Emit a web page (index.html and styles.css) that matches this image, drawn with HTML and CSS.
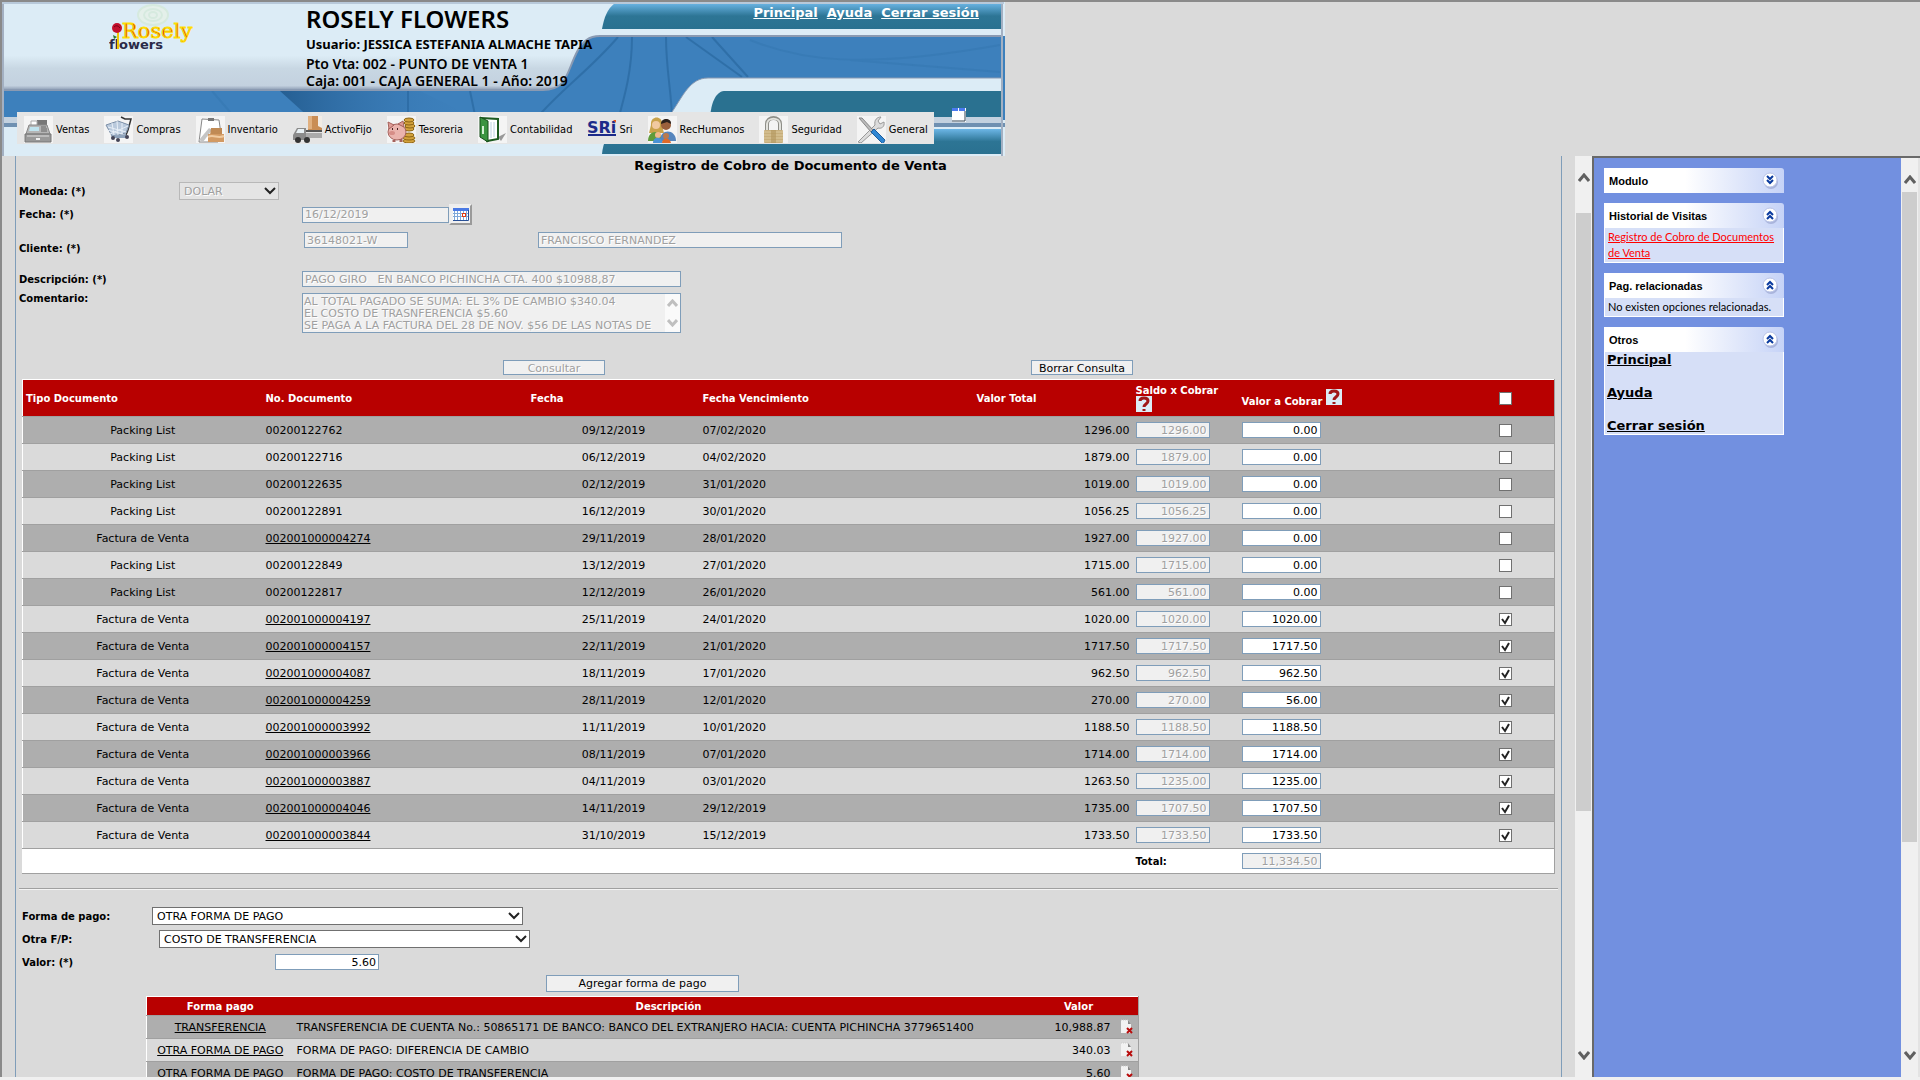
FILE: index.html
```
<!DOCTYPE html>
<html lang="es">
<head>
  <meta charset="UTF-8">
  <title>Rosely Flowers - Registro de Cobro</title>
  <link rel="stylesheet" href="styles.css">
</head>
<body>

  <!-- Cabecera -->
  <header class="header">
    <svg class="header-bg" viewBox="0 0 1005 156" width="1005" height="156" aria-hidden="true">
      <defs>
        <linearGradient id="gPanel" x1="0" y1="0" x2="0" y2="1">
          <stop offset="0.6" stop-color="#dcecf6"/><stop offset="0.75" stop-color="#c8d7e3"/><stop offset="0.95" stop-color="#c3d1df"/><stop offset="1" stop-color="#8a9ab2"/>
        </linearGradient>
        <linearGradient id="gTeal" x1="0" y1="0" x2="0" y2="1">
          <stop offset="0" stop-color="#6cb6e6"/><stop offset="0.5" stop-color="#2d7595"/><stop offset="1" stop-color="#2a7190"/>
        </linearGradient>
        <linearGradient id="gShade" x1="0" y1="0" x2="1" y2="0">
          <stop offset="0" stop-color="#1f5688" stop-opacity="0.8"/><stop offset="1" stop-color="#3d80bd" stop-opacity="0"/>
        </linearGradient>
      </defs>
      <rect x="2" y="2" width="1003" height="154" fill="#dcecf6"/>
      <rect x="4" y="36" width="1001" height="84" fill="#3d80bc"/>
      <path d="M280 91 H420 L480 120 H312 Z" fill="url(#gShade)"/>
      <path d="M408 91 V120 M632 37 C632 70 625 95 618 120 M666 37 C666 70 672 95 672 120 M686 37 L742 77 M712 37 L748 77 M618 37 C590 70 560 90 535 120 M470 91 L476 120" fill="none" stroke="#2a689f" stroke-width="2" opacity="0.7"/>
      <path d="M212 91 L230 112 M750 40 C800 60 860 70 1000 45 M850 60 L1000 72" fill="none" stroke="#3373ac" stroke-width="2" opacity="0.4"/>
      <path d="M4 4 H1002 V36 H600 C588 36 583 42 578 50 C566 72 568 90 543 90 H4 Z" fill="url(#gPanel)"/>
      <path d="M600 29 H1002 V36 H600 Z M602 4 H618 V36 H590 Z" fill="#dcecf6"/>
      <path d="M1002 36 H600 C588 36 583 42 578 50 C566 72 568 90 543 90 H4" fill="none" stroke="#8a9ab2" stroke-width="2"/>
      <path d="M615 3 H1002 V29 H602 C604 18 607 9 615 3 Z" fill="url(#gTeal)"/>
      <path d="M1002 78 H708 C690 78 683 96 672 112 V118 H1002 Z" fill="#dcecf6" stroke="#8a9ab2"/>
      <path d="M1002 91 H724 C715 92 711 104 710 118 H1002 Z" fill="#2a7190"/>
      <rect x="4" y="117" width="998" height="6" fill="#c3d1df"/>
      <rect x="4" y="123" width="1001" height="4" fill="#6f90b1"/>
      <rect x="4" y="127" width="998" height="2" fill="#dcecf6"/>
      <path d="M615 129 H1002 V154 H602 C603 143 607 134 615 129 Z" fill="url(#gTeal)"/>
      <path d="M3 3 V156 M1002 3 V156" stroke="#a3b0c2" stroke-width="2"/>
      <path d="M2 3 H1004" stroke="#b8c9da" stroke-width="2"/>
    </svg>

    <div class="brand">
      <svg width="92" height="50" viewBox="0 0 92 50" role="img" aria-label="Rosely flowers">
        <g fill="none" stroke="#d6eadf" stroke-width="2"><ellipse cx="44" cy="12" rx="15" ry="10" fill="#e4f0ea"/><ellipse cx="44" cy="12" rx="9" ry="6"/><ellipse cx="44" cy="12" rx="4" ry="3"/></g>
        <text x="13" y="35" class="logo-top">Rosely</text>
        <text x="0" y="46" class="logo-sub">flowers</text>
        <path d="M9 28 V46" stroke="#f0c800" stroke-width="2"/>
        <circle cx="8" cy="25" r="5" fill="#c4102c"/><path d="M5 24 q3 -3 6 1" stroke="#7c0018" fill="none"/>
        <path d="M8 34 l-4 -2 1 4z" fill="#2c7a2c"/>
      </svg>
    </div>
    <div class="session">
      <h1>ROSELY FLOWERS</h1>
      <p class="user">Usuario: JESSICA ESTEFANIA ALMACHE TAPIA</p>
      <p>Pto Vta: 002 - PUNTO DE VENTA 1</p>
      <p>Caja: 001 - CAJA GENERAL 1 - Año: 2019</p>
    </div>
    <div class="top-links">
      <a href="#">Principal</a>
      <a href="#">Ayuda</a>
      <a href="#">Cerrar sesión</a>
    </div>

    <nav class="menu">
      <a href="#"><svg viewBox="0 0 29 27"><rect width="29" height="27" fill="#f4f4f4"/><path d="M13 4h10v5h-10z" fill="#777"/><path d="M7 5h6v6H7z" fill="#fff" stroke="#aaa"/><path d="M5 9h18l3 9H2z" fill="#b5b5b5" stroke="#888"/><path d="M6 11h9v4H5z" fill="#bfe3ee"/><path d="M17 11h5M17 13h6M17 15h6" stroke="#666"/><path d="M1 18h26v8H1z" fill="#999" stroke="#777"/><path d="M3 20h22" stroke="#ddd"/><path d="M12 22h4v2h-4z" fill="#eee"/></svg>Ventas</a>
      <a href="#"><svg viewBox="0 0 29 27"><rect width="29" height="27" fill="#f4f4f4"/><path d="M17 1l4 2h6l-3 11-2 5" fill="none" stroke="#333" stroke-width="1.5"/><path d="M2 9l12-4 11 4-3 8-14 3z" fill="#b9c9dc" stroke="#7d90a8"/><path d="M4 11l18 5M3 14l16 4M8 7l2 12M13 5l1 14M18 7l0 11M6 18l18-8" stroke="#e8eff7"/><path d="M7 20l15-2 1 4H9z" fill="#8fa3bb"/><circle cx="9" cy="22" r="2" fill="#445"/><circle cx="14" cy="24" r="2" fill="#445"/><circle cx="23" cy="21" r="2" fill="#445"/></svg>Compras</a>
      <a href="#"><svg viewBox="0 0 29 27"><rect width="29" height="27" fill="#f4f4f4"/><path d="M6 3l17 1 2 14-3 8H3z" fill="#fff" stroke="#888"/><path d="M12 2h6v3h-6z" fill="#777"/><path d="M3 24L13 12l3 2-9 12z" fill="#c5c5c5"/><path d="M15 12h11v7H14z" fill="#c08a54"/><path d="M12 18h16v8H12z" fill="#d29a63"/><path d="M12 21c5-3 10 2 16-1" stroke="#f0cba0" fill="none" stroke-width="2"/></svg>Inventario</a>
      <a href="#"><svg viewBox="0 0 29 27"><path d="M15 0h14v15H15z" fill="#c98d55"/><path d="M22 0h3v10l4 2v-12z" fill="#f1ece6"/><path d="M15 0h4v13h-4z" fill="#e0b080"/><path d="M4 12h9v12H0v-5z" fill="#8b8b8b"/><path d="M5 13h6v4H3z" fill="#e8f0f4"/><path d="M13 17h16v5H13z" fill="#aaa"/><path d="M13 15h16" stroke="#555" stroke-width="2"/><circle cx="5" cy="24" r="3" fill="#333"/><circle cx="14" cy="24" r="3" fill="#333"/></svg>ActivoFijo</a>
      <a href="#"><svg viewBox="0 0 29 27"><rect width="29" height="27" fill="#f4f4f4"/><g fill="#d3a23c" stroke="#8c6414"><ellipse cx="22" cy="13" rx="5" ry="2"/><ellipse cx="23" cy="10" rx="5" ry="2"/><ellipse cx="22" cy="7" rx="5" ry="2"/><ellipse cx="22" cy="4" rx="5" ry="2"/><ellipse cx="22" cy="25" rx="6" ry="2"/><ellipse cx="22" cy="22" rx="6" ry="2"/><ellipse cx="22" cy="19" rx="5" ry="2"/></g><ellipse cx="10" cy="16" rx="9" ry="8" fill="#eab3ad" stroke="#a5625c"/><path d="M2 13L1 6l6 3zM11 8l5-3 1 6z" fill="#e09c96" stroke="#a5625c"/><ellipse cx="5" cy="17" rx="3" ry="2" fill="#d68d87"/><path d="M7 24v2M14 23v3" stroke="#a5625c" stroke-width="3"/><path d="M5 13h1M10 13h1" stroke="#422" stroke-width="2"/></svg>Tesoreria</a>
      <a href="#"><svg viewBox="0 0 29 27"><rect width="29" height="27" fill="#f4f4f4"/><path d="M20 21l8-4-5 8z" fill="#999"/><path d="M3 2l17 1v20L9 25z" fill="#fff" stroke="#1e5a20" stroke-width="2"/><path d="M2 1l8 4v21l-8-5z" fill="#3c9440" stroke="#174d19"/><path d="M5 10v8" stroke="#d7f0d5" stroke-width="2"/><path d="M13 6v16M16 6v15" stroke="#bcd0df"/></svg>Contabilidad</a>
      <a href="#"><svg viewBox="0 0 29 27"><text x="0" y="17" class="sri">SRi</text><path d="M26 4h3v3z" fill="#e2571e"/><path d="M1 19h28" stroke="#1c2b8a" stroke-width="2"/></svg>Sri</a>
      <a href="#"><svg viewBox="0 0 29 27"><rect width="29" height="27" fill="#f4f4f4"/><path d="M3 9c-1-10 13-10 11 1l2 7H1z" fill="#c9a24a"/><circle cx="8" cy="9" r="4" fill="#f1c9a0"/><path d="M0 25c0-12 14-12 15 0z" fill="#5f9b3b"/><circle cx="18" cy="9" r="5" fill="#9c603c"/><path d="M13 8c0-7 11-6 10 0l-4-2z" fill="#2d211c"/><path d="M12 25c0-13 16-12 16 0z" fill="#5585bd"/><circle cx="10" cy="19" r="3" fill="#efb98c"/><path d="M5 27c0-7 9-7 10 0z" fill="#4a93d6"/><circle cx="18" cy="20" r="3" fill="#b97a4e"/><path d="M14 27c0-6 8-6 9 0z" fill="#e06a28"/></svg>RecHumanos</a>
      <a href="#"><svg viewBox="0 0 29 27"><rect width="29" height="27" fill="#f4f4f4"/><path d="M8 14V8c0-8 13-8 13 0v6" fill="none" stroke="#8e8e88" stroke-width="4"/><path d="M8 14V8c0-7 13-7 13 0v6" fill="none" stroke="#e2e2dd" stroke-width="2"/><rect x="5" y="14" width="19" height="13" rx="1" fill="#c7ae7b"/><path d="M5 16h19M5 19h19M5 22h19M5 25h19" stroke="#dcc99e"/><path d="M12 14h5v13h-5z" fill="#b1945c" opacity=".6"/></svg>Seguridad</a>
      <a href="#"><svg viewBox="0 0 29 27"><rect width="29" height="27" fill="#f4f4f4"/><path d="M1 26L18 9c-1-5 2-8 6-8l-3 4 2 3 4-2c1 5-3 7-6 6L4 27z" fill="#dcdcdc" stroke="#999"/><path d="M2 2l3 0 11 12-2 2z" fill="#bbb" stroke="#888"/><path d="M14 16l3-3 11 11-2 4z" fill="#2f86d2" stroke="#1b5c9c"/></svg>General</a>
    </nav>
    <svg class="window-icon" width="14" height="14" viewBox="0 0 14 14"><path d="M0 0h14v14H0z" fill="#fff"/><path d="M0 0h6v3H0zM7 0h6v3H7z" fill="#4b7af0"/><path d="M0 13h13V3" fill="none" stroke="#345"/></svg>
  </header>

  <div class="frames">
    <main class="content-frame">
      <div class="content">
        <h2>Registro de Cobro de Documento de Venta</h2>

        <form class="query">
          <div class="row moneda">
            <label for="moneda">Moneda: (*)</label>
            <select id="moneda" disabled><option>DOLAR</option></select>
          </div>
          <div class="row fecha">
            <label for="fecha">Fecha: (*)</label>
            <input type="text" id="fecha" value="16/12/2019" disabled>
            <button type="button" class="calendar" aria-label="Calendario"><svg width="16" height="13" viewBox="0 0 16 13"><path d="M0 0h16v13H0z" fill="#fff"/><path d="M0 0h16v3H0z" fill="#4b7ae4"/><path d="M0 5.500h15M0 8.500h15M1.500 3v9M4.500 3v9M7.500 3v9M10.500 3v9M13.500 3v9" stroke="#7fa8d8"/><path d="M15.500 2v10.500H0" fill="none" stroke="#274f96"/><rect x="9.500" y="5.500" width="3" height="3" fill="#fff" stroke="#e23a12"/></svg></button>
          </div>
          <div class="row cliente">
            <label for="cliente">Cliente: (*)</label>
            <input type="text" id="cliente" value="36148021-W" disabled>
            <input type="text" class="nombre" aria-label="Nombre del cliente" value="FRANCISCO FERNANDEZ" disabled>
          </div>
          <div class="row descripcion">
            <label for="descripcion">Descripción: (*)</label>
            <input type="text" id="descripcion" value="PAGO GIRO   EN BANCO PICHINCHA CTA. 400 $10988,87" disabled>
          </div>
          <div class="row comentario">
            <label for="comentario">Comentario:</label>
            <div class="area">
              <textarea id="comentario" disabled>AL TOTAL PAGADO SE SUMA: EL 3% DE CAMBIO $340.04
EL COSTO DE TRASNFERENCIA $5.60
SE PAGA A LA FACTURA DEL 28 DE NOV. $56 DE LAS NOTAS DE</textarea>
              <div class="area-scroll">
                <svg width="11" height="9" viewBox="0 0 11 9"><path d="M1 7l4.500-5 4.500 5" fill="none" stroke="#bfbfbf" stroke-width="3"/></svg>
                <svg width="11" height="9" viewBox="0 0 11 9"><path d="M1 2l4.500 5 4.500-5" fill="none" stroke="#bfbfbf" stroke-width="3"/></svg>
              </div>
            </div>
          </div>
          <div class="actions">
            <button type="button" disabled>Consultar</button>
            <button type="button">Borrar Consulta</button>
          </div>
        </form>

        <!-- Documentos pendientes -->
        <table class="docs">
          <colgroup>
            <col class="c-tipo"><col class="c-num"><col class="c-fecha"><col class="c-venc"><col class="c-total"><col class="c-saldo"><col><col class="c-check">
          </colgroup>
          <thead>
            <tr>
              <th>Tipo Documento</th><th>No. Documento</th><th>Fecha</th><th>Fecha Vencimiento</th><th>Valor Total</th>
              <th>Saldo x Cobrar <svg class="help" viewBox="0 0 16 16"><path d="M0 0h16v16H0z" fill="#dcecf6"/><path d="M4 5c0-4 8-4 8 0 0 3-4 3-4 6M8 13v2" fill="none" stroke="#a01818" stroke-width="3"/></svg></th>
              <th>Valor a Cobrar <svg class="help" viewBox="0 0 16 16"><path d="M0 0h16v16H0z" fill="#dcecf6"/><path d="M4 5c0-4 8-4 8 0 0 3-4 3-4 6M8 13v2" fill="none" stroke="#a01818" stroke-width="3"/></svg></th>
              <th><input type="checkbox" aria-label="Seleccionar todos"></th>
            </tr>
          </thead>
          <tbody>
            <tr><td>Packing List</td><td>00200122762</td><td>09/12/2019</td><td>07/02/2020</td><td>1296.00</td><td><input type="text" aria-label="Saldo" value="1296.00" disabled></td><td><input type="text" aria-label="Valor" value="0.00"></td><td><input type="checkbox" aria-label="Cobrar"></td></tr>
            <tr><td>Packing List</td><td>00200122716</td><td>06/12/2019</td><td>04/02/2020</td><td>1879.00</td><td><input type="text" aria-label="Saldo" value="1879.00" disabled></td><td><input type="text" aria-label="Valor" value="0.00"></td><td><input type="checkbox" aria-label="Cobrar"></td></tr>
            <tr><td>Packing List</td><td>00200122635</td><td>02/12/2019</td><td>31/01/2020</td><td>1019.00</td><td><input type="text" aria-label="Saldo" value="1019.00" disabled></td><td><input type="text" aria-label="Valor" value="0.00"></td><td><input type="checkbox" aria-label="Cobrar"></td></tr>
            <tr><td>Packing List</td><td>00200122891</td><td>16/12/2019</td><td>30/01/2020</td><td>1056.25</td><td><input type="text" aria-label="Saldo" value="1056.25" disabled></td><td><input type="text" aria-label="Valor" value="0.00"></td><td><input type="checkbox" aria-label="Cobrar"></td></tr>
            <tr><td>Factura de Venta</td><td><a href="#">002001000004274</a></td><td>29/11/2019</td><td>28/01/2020</td><td>1927.00</td><td><input type="text" aria-label="Saldo" value="1927.00" disabled></td><td><input type="text" aria-label="Valor" value="0.00"></td><td><input type="checkbox" aria-label="Cobrar"></td></tr>
            <tr><td>Packing List</td><td>00200122849</td><td>13/12/2019</td><td>27/01/2020</td><td>1715.00</td><td><input type="text" aria-label="Saldo" value="1715.00" disabled></td><td><input type="text" aria-label="Valor" value="0.00"></td><td><input type="checkbox" aria-label="Cobrar"></td></tr>
            <tr><td>Packing List</td><td>00200122817</td><td>12/12/2019</td><td>26/01/2020</td><td>561.00</td><td><input type="text" aria-label="Saldo" value="561.00" disabled></td><td><input type="text" aria-label="Valor" value="0.00"></td><td><input type="checkbox" aria-label="Cobrar"></td></tr>
            <tr><td>Factura de Venta</td><td><a href="#">002001000004197</a></td><td>25/11/2019</td><td>24/01/2020</td><td>1020.00</td><td><input type="text" aria-label="Saldo" value="1020.00" disabled></td><td><input type="text" aria-label="Valor" value="1020.00"></td><td><input type="checkbox" aria-label="Cobrar" checked></td></tr>
            <tr><td>Factura de Venta</td><td><a href="#">002001000004157</a></td><td>22/11/2019</td><td>21/01/2020</td><td>1717.50</td><td><input type="text" aria-label="Saldo" value="1717.50" disabled></td><td><input type="text" aria-label="Valor" value="1717.50"></td><td><input type="checkbox" aria-label="Cobrar" checked></td></tr>
            <tr><td>Factura de Venta</td><td><a href="#">002001000004087</a></td><td>18/11/2019</td><td>17/01/2020</td><td>962.50</td><td><input type="text" aria-label="Saldo" value="962.50" disabled></td><td><input type="text" aria-label="Valor" value="962.50"></td><td><input type="checkbox" aria-label="Cobrar" checked></td></tr>
            <tr><td>Factura de Venta</td><td><a href="#">002001000004259</a></td><td>28/11/2019</td><td>12/01/2020</td><td>270.00</td><td><input type="text" aria-label="Saldo" value="270.00" disabled></td><td><input type="text" aria-label="Valor" value="56.00"></td><td><input type="checkbox" aria-label="Cobrar" checked></td></tr>
            <tr><td>Factura de Venta</td><td><a href="#">002001000003992</a></td><td>11/11/2019</td><td>10/01/2020</td><td>1188.50</td><td><input type="text" aria-label="Saldo" value="1188.50" disabled></td><td><input type="text" aria-label="Valor" value="1188.50"></td><td><input type="checkbox" aria-label="Cobrar" checked></td></tr>
            <tr><td>Factura de Venta</td><td><a href="#">002001000003966</a></td><td>08/11/2019</td><td>07/01/2020</td><td>1714.00</td><td><input type="text" aria-label="Saldo" value="1714.00" disabled></td><td><input type="text" aria-label="Valor" value="1714.00"></td><td><input type="checkbox" aria-label="Cobrar" checked></td></tr>
            <tr><td>Factura de Venta</td><td><a href="#">002001000003887</a></td><td>04/11/2019</td><td>03/01/2020</td><td>1263.50</td><td><input type="text" aria-label="Saldo" value="1235.00" disabled></td><td><input type="text" aria-label="Valor" value="1235.00"></td><td><input type="checkbox" aria-label="Cobrar" checked></td></tr>
            <tr><td>Factura de Venta</td><td><a href="#">002001000004046</a></td><td>14/11/2019</td><td>29/12/2019</td><td>1735.00</td><td><input type="text" aria-label="Saldo" value="1707.50" disabled></td><td><input type="text" aria-label="Valor" value="1707.50"></td><td><input type="checkbox" aria-label="Cobrar" checked></td></tr>
            <tr><td>Factura de Venta</td><td><a href="#">002001000003844</a></td><td>31/10/2019</td><td>15/12/2019</td><td>1733.50</td><td><input type="text" aria-label="Saldo" value="1733.50" disabled></td><td><input type="text" aria-label="Valor" value="1733.50"></td><td><input type="checkbox" aria-label="Cobrar" checked></td></tr>
          </tbody>
          <tfoot>
            <tr><td colspan="5"></td><td><label for="total">Total:</label></td><td><input type="text" id="total" value="11,334.50" disabled></td><td></td></tr>
          </tfoot>
        </table>

        <hr>

        <!-- Formas de pago -->
        <form class="payment">
          <div class="pay-row">
            <label for="forma">Forma de pago:</label>
            <select id="forma"><option>OTRA FORMA DE PAGO</option></select>
          </div>
          <div class="pay-row otra">
            <label for="otra">Otra F/P:</label>
            <select id="otra"><option>COSTO DE TRANSFERENCIA</option></select>
          </div>
          <div class="pay-row valor">
            <label for="valor">Valor: (*)</label>
            <input type="text" id="valor" value="5.60">
          </div>
          <button type="button" class="add">Agregar forma de pago</button>
        </form>

        <table class="payments">
          <colgroup><col class="p-forma"><col><col class="p-valor"><col class="p-del"></colgroup>
          <thead>
            <tr><th>Forma pago</th><th>Descripción</th><th>Valor</th><th></th></tr>
          </thead>
          <tbody>
            <tr><td><a href="#">TRANSFERENCIA</a></td><td>TRANSFERENCIA DE CUENTA No.: 50865171 DE BANCO: BANCO DEL EXTRANJERO HACIA: CUENTA PICHINCHA 3779651400</td><td>10,988.87</td><td><button type="button" aria-label="Eliminar"><svg width="13" height="16" viewBox="0 0 13 16"><path d="M0 1h7l3 4v9H0z" fill="#f2f2f2"/><path d="M7 1v4h3z" fill="#888"/><path d="M0 1h7" stroke="#ccc" stroke-dasharray="1 1"/><path d="M6 9l5 5M11 9l-5 5" stroke="#b80c0c" stroke-width="2"/></svg></button></td></tr>
            <tr><td><a href="#">OTRA FORMA DE PAGO</a></td><td>FORMA DE PAGO: DIFERENCIA DE CAMBIO</td><td>340.03</td><td><button type="button" aria-label="Eliminar"><svg width="13" height="16" viewBox="0 0 13 16"><path d="M0 1h7l3 4v9H0z" fill="#f2f2f2"/><path d="M7 1v4h3z" fill="#888"/><path d="M0 1h7" stroke="#ccc" stroke-dasharray="1 1"/><path d="M6 9l5 5M11 9l-5 5" stroke="#b80c0c" stroke-width="2"/></svg></button></td></tr>
            <tr><td><a href="#">OTRA FORMA DE PAGO</a></td><td>FORMA DE PAGO: COSTO DE TRANSFERENCIA</td><td>5.60</td><td><button type="button" aria-label="Eliminar"><svg width="13" height="16" viewBox="0 0 13 16"><path d="M0 1h7l3 4v9H0z" fill="#f2f2f2"/><path d="M7 1v4h3z" fill="#888"/><path d="M0 1h7" stroke="#ccc" stroke-dasharray="1 1"/><path d="M6 9l5 5M11 9l-5 5" stroke="#b80c0c" stroke-width="2"/></svg></button></td></tr>
          </tbody>
        </table>
      </div>

      <div class="scrollbar">
        <svg width="12" height="10" viewBox="0 0 12 10"><path d="M1 8l5-6 5 6" fill="none" stroke="#606060" stroke-width="3"/></svg>
        <div class="track"><div class="thumb main-thumb"></div></div>
        <svg width="12" height="10" viewBox="0 0 12 10"><path d="M1 2l5 6 5-6" fill="none" stroke="#606060" stroke-width="3"/></svg>
      </div>
    </main>

    <aside class="side-frame">
      <div class="side">
        <section class="panel">
          <h3>Modulo <svg viewBox="0 0 17 17"><circle cx="9" cy="10" r="7" fill="#a9b4dc"/><circle cx="8" cy="8" r="7" fill="#fff" stroke="#b9c3e6"/><path d="M5 4l3 3 3-3M5 8l3 3 3-3" fill="none" stroke="#0a3a9e" stroke-width="2"/></svg></h3>
        </section>
        <section class="panel">
          <h3>Historial de Visitas <svg viewBox="0 0 17 17"><circle cx="9" cy="10" r="7" fill="#a9b4dc"/><circle cx="8" cy="8" r="7" fill="#fff" stroke="#b9c3e6"/><path d="M5 8l3-3 3 3M5 12l3-3 3 3" fill="none" stroke="#0a3a9e" stroke-width="2"/></svg></h3>
          <div class="panel-body"><a href="#" class="visited">Registro de Cobro de Documentos de Venta</a></div>
        </section>
        <section class="panel">
          <h3>Pag. relacionadas <svg viewBox="0 0 17 17"><circle cx="9" cy="10" r="7" fill="#a9b4dc"/><circle cx="8" cy="8" r="7" fill="#fff" stroke="#b9c3e6"/><path d="M5 8l3-3 3 3M5 12l3-3 3 3" fill="none" stroke="#0a3a9e" stroke-width="2"/></svg></h3>
          <div class="panel-body">No existen opciones relacionadas.</div>
        </section>
        <section class="panel">
          <h3>Otros <svg viewBox="0 0 17 17"><circle cx="9" cy="10" r="7" fill="#a9b4dc"/><circle cx="8" cy="8" r="7" fill="#fff" stroke="#b9c3e6"/><path d="M5 8l3-3 3 3M5 12l3-3 3 3" fill="none" stroke="#0a3a9e" stroke-width="2"/></svg></h3>
          <div class="panel-body others"><a href="#">Principal</a><a href="#">Ayuda</a><a href="#">Cerrar sesión</a></div>
        </section>
      </div>
      <div class="scrollbar">
        <svg width="12" height="10" viewBox="0 0 12 10"><path d="M1 8l5-6 5 6" fill="none" stroke="#606060" stroke-width="3"/></svg>
        <div class="track"><div class="thumb side-thumb"></div></div>
        <svg width="12" height="10" viewBox="0 0 12 10"><path d="M1 2l5 6 5-6" fill="none" stroke="#606060" stroke-width="3"/></svg>
      </div>
    </aside>
  </div>

</body>
</html>
```
FILE: styles.css
```
* {
  box-sizing: border-box;
}

body {
  margin: 0;
  height: 100vh;
  display: flex;
  flex-direction: column;
  overflow: hidden;
  background: #dadada;
  border-top: 2px solid #8a8a8a;
  border-bottom: 3px solid #f0f0f0;
  font-family: "DejaVu Sans", Verdana, sans-serif;
  font-size: 11px;
  color: #000;
}

h1, h2, h3, p {
  margin: 0;
}

a {
  color: #000;
}

/* cabecera */
.header {
  position: relative;
  flex: none;
  width: 1005px;
  height: 154px;
  border-left: 2px solid #8a8a8a;
  display: grid;
  grid-template-columns: 304px 1fr auto;
  grid-template-rows: 110px 32px;
}

.header-bg {
  position: absolute;
  left: -2px;
  top: -2px;
  z-index: -1;
}

.brand {
  padding: 1px 0 0 107px;
}

.logo-top {
  font-family: "DejaVu Serif", serif;
  font-size: 21px;
  fill: #d83a10;
  stroke: #ffe000;
  stroke-width: 1px;
}

.logo-sub {
  font-family: "DejaVu Sans", sans-serif;
  font-size: 13px;
  font-weight: bold;
  fill: #2a2a48;
}

.session {
  font-family: "Noto Sans", sans-serif;
  font-size: 14px;
  font-weight: 600;
  line-height: 17px;
  white-space: nowrap;
}

.session h1 {
  font-size: 24px;
  font-weight: 600;
  line-height: 34px;
}

.session .user {
  margin-bottom: 2px;
  font-size: 13px;
  font-weight: bold;
}

.top-links {
  display: flex;
  gap: 9px;
  padding: 2px 26px 0 0;
  font-size: 13px;
  font-weight: bold;
  line-height: 17px;
}

.top-links a {
  color: #fff;
}

.menu {
  grid-column: 1 / -1;
  justify-self: start;
  margin-left: 15px;
  padding: 2px 6px 0 7px;
  display: flex;
  align-items: center;
  gap: 15px;
  background: #e5e5e5;
}

.menu a {
  display: flex;
  align-items: center;
  gap: 3px;
  font-family: "DejaVu Sans Condensed", Tahoma, sans-serif;
  text-decoration: none;
}

.menu svg {
  width: 29px;
  height: 27px;
}

.sri {
  font: bold 16px "DejaVu Sans", sans-serif;
  fill: #1c2b8a;
}

.window-icon {
  position: absolute;
  left: 950px;
  top: 106px;
}

/* marcos */
.frames {
  flex: 1;
  min-height: 0;
  display: grid;
  grid-template-columns: 1fr 328px;
}

.content-frame {
  display: flex;
  min-width: 0;
  overflow: hidden;
  border-left: 2px solid #8a8a8a;
}

.content {
  flex: 1;
  min-width: 0;
  margin: 0 13px;
  padding: 0 3px;
  border: solid #7f9db9;
  border-width: 0 1px;
}

h2 {
  padding-left: 4px;
  font-size: 13px;
  line-height: 20px;
  text-align: center;
}

label {
  font-size: 10px;
  font-weight: bold;
}

input[type="text"], textarea {
  height: 16px;
  padding: 0 2px;
  border: 1px solid #7f9db9;
  background: #fff;
  font: inherit;
  color: #000;
}

select {
  height: 18px;
  padding: 0 4px;
  border: 1px solid #707070;
  border-radius: 0;
  appearance: none;
  background: #fff url('data:image/svg+xml,<svg xmlns="http://www.w3.org/2000/svg" width="12" height="10"><path d="M1 2l5 5 5-5" fill="none" stroke="%23222" stroke-width="2"/></svg>') no-repeat right 2px center;
  font: inherit;
  color: #000;
}

button {
  padding: 0;
  border: 1px solid #7f9db9;
  background: #f0f0f0;
  font: inherit;
  color: #000;
}

input[type="text"]:disabled, textarea:disabled, select:disabled, button:disabled {
  background-color: #f0f0f0;
  color: #a0a0a0;
  text-shadow: 1px 1px #fff;
  opacity: 1;
}

.query {
  padding-top: 5px;
}

.row {
  display: flex;
  align-items: center;
}

.row label {
  width: 283px;
}

.moneda {
  height: 20px;
}

.moneda label {
  width: 160px;
}

.moneda select {
  width: 100px;
}

.moneda select:disabled {
  border-color: #b8b8b8;
  background-color: #e4e4e4;
}

.fecha {
  height: 21px;
  margin-top: 3px;
}

.fecha input {
  width: 147px;
}

.calendar {
  width: 23px;
  height: 21px;
  border: 2px outset #eee;
  line-height: 0;
}

.cliente {
  height: 32px;
  margin-top: 7px;
}

.cliente label {
  width: 285px;
}

.cliente input {
  align-self: flex-start;
  width: 104px;
}

.cliente .nombre {
  width: 304px;
  margin-left: 130px;
}

.descripcion {
  margin-top: 7px;
}

.descripcion input {
  width: 379px;
  white-space: pre;
}

.comentario {
  align-items: flex-start;
  margin-top: 6px;
}

.area {
  position: relative;
  width: 379px;
  height: 40px;
}

.area textarea {
  display: block;
  width: 100%;
  height: 100%;
  padding: 2px 1px;
  line-height: 12px;
  resize: none;
  overflow: hidden;
  white-space: pre;
}

.area-scroll {
  position: absolute;
  right: 1px;
  top: 1px;
  bottom: 1px;
  width: 15px;
  padding: 5px 2px;
  display: flex;
  flex-direction: column;
  justify-content: space-between;
  background: #fafafa;
}

.actions {
  display: flex;
  gap: 426px;
  margin: 27px 0 4px 484px;
}

.actions button {
  width: 102px;
  height: 15px;
  padding-top: 2px;
  line-height: 12px;
  overflow: hidden;
}

/* tabla de documentos */
table {
  border-collapse: collapse;
  table-layout: fixed;
}

th {
  padding: 0 3px;
  background: #b80000;
  color: #fff;
  font-size: 10px;
  text-align: left;
}

td {
  padding: 0 3px;
}

tbody tr {
  border-top: 1px solid #a0a0a0;
}

tbody tr:nth-child(odd) {
  background: #aeaeae;
}

.docs {
  width: calc(100% - 6px);
  margin-left: 3px;
  border: 1px solid #a0a0a0;
  border-top-color: #fff;
  border-left-color: #fff;
}

.c-tipo { width: 240px; }
.c-num { width: 265px; }
.c-fecha { width: 172px; }
.c-venc { width: 274px; }
.c-total { width: 159px; }
.c-saldo { width: 106px; }
.c-check { width: 97px; }

.docs th {
  height: 37px;
}

.help {
  width: 16px;
  height: 16px;
  vertical-align: -3px;
}

th:nth-child(7) .help {
  vertical-align: 0;
}

.docs tbody td {
  height: 27px;
}

.docs td:first-child, .docs td:nth-child(3) {
  text-align: center;
}

.docs tbody td:nth-child(5) {
  text-align: right;
}

.docs td input[type="text"] {
  display: block;
  width: 79px;
  text-align: right;
}

.docs tbody td:nth-child(6) input {
  width: 74px;
}

.docs th:last-child, .docs td:last-child {
  text-align: center;
}

input[type="checkbox"] {
  appearance: none;
  display: inline-block;
  width: 13px;
  height: 13px;
  margin: 0;
  border: 1px solid #707070;
  background: #fff;
  vertical-align: middle;
}

input[type="checkbox"]:checked {
  background: #fff url('data:image/svg+xml,<svg xmlns="http://www.w3.org/2000/svg" width="11" height="11"><path d="M2 5l3 4 4-7" fill="none" stroke="%23222" stroke-width="2"/></svg>') no-repeat center;
}

.docs tfoot tr {
  background: #fff;
  border-top: 1px solid #a0a0a0;
}

.docs tfoot td {
  height: 25px;
}

hr {
  margin: 14px 0 17px;
  border: 0;
  border-top: 1px solid #a0a0a0;
  border-bottom: 1px solid #f4f4f4;
}

/* formas de pago */
.payment {
  display: flex;
  flex-direction: column;
  gap: 5px;
  padding-left: 3px;
}

.pay-row {
  display: flex;
  align-items: center;
  height: 18px;
}

.pay-row label {
  width: 130px;
}

.pay-row select {
  width: 371px;
}

.otra label {
  width: 137px;
}

.valor label {
  width: 253px;
}

.valor input {
  width: 104px;
  text-align: right;
}

.payment .add {
  width: 193px;
  height: 17px;
  margin: -1px 0 4px 524px;
  line-height: 14px;
}

.payments {
  width: 993px;
  margin-left: 127px;
  border: 1px solid #a0a0a0;
  border-top-color: #fff;
  border-left-color: #fff;
}

.p-forma { width: 147px; }
.p-valor { width: 70px; }
.p-del { width: 25px; }

.payments th {
  height: 19px;
  text-align: center;
}

.payments td {
  height: 23px;
  white-space: nowrap;
}

.payments td:first-child {
  text-align: center;
}

.payments td:nth-child(3) {
  text-align: right;
}

.payments button {
  display: block;
  border: 0;
  background: none;
  margin-left: 4px;
  line-height: 0;
}

/* barras de desplazamiento */
.scrollbar {
  flex: none;
  width: 17px;
  padding: 17px 0 17px;
  display: flex;
  flex-direction: column;
  align-items: center;
  background: #f0f0f0;
}

.track {
  flex: 1;
  width: 15px;
  margin: 3px 0;
}

.thumb {
  background: #cdcdcd;
}

.main-thumb {
  height: 598px;
  margin-top: 27px;
}

.side-thumb {
  height: 650px;
  margin-top: 4px;
}

/* menu lateral */
.side-frame {
  display: flex;
  border: solid #696969;
  border-width: 2px 0 0 2px;
  background: #7290e0;
}

.side {
  flex: 1;
  padding: 10px;
}

.side-frame .scrollbar {
  width: 19px;
  border-right: 2px solid #e3e3e3;
}

.panel {
  width: 180px;
  margin-bottom: 10px;
}

.panel h3 {
  display: flex;
  align-items: center;
  justify-content: space-between;
  height: 25px;
  padding: 0 5px;
  border-radius: 0 3px 0 0;
  background: linear-gradient(to right, #fff 45%, #c6d3f7);
  font-family: "Liberation Sans", Arial, sans-serif;
  font-size: 11px;
}

.panel h3 svg {
  width: 17px;
  height: 17px;
}

.panel-body {
  padding: 1px 3px;
  border: 1px solid #fff;
  border-top: 0;
  background: #d6dff7;
  font-family: Lato, "Trebuchet MS", sans-serif;
  line-height: 16px;
}

.visited {
  color: #f00;
}

.others {
  display: flex;
  flex-direction: column;
  align-items: flex-start;
  gap: 17px;
  padding: 0 2px;
  font-family: "DejaVu Sans", Verdana, sans-serif;
  font-size: 13px;
  font-weight: bold;
}
```
